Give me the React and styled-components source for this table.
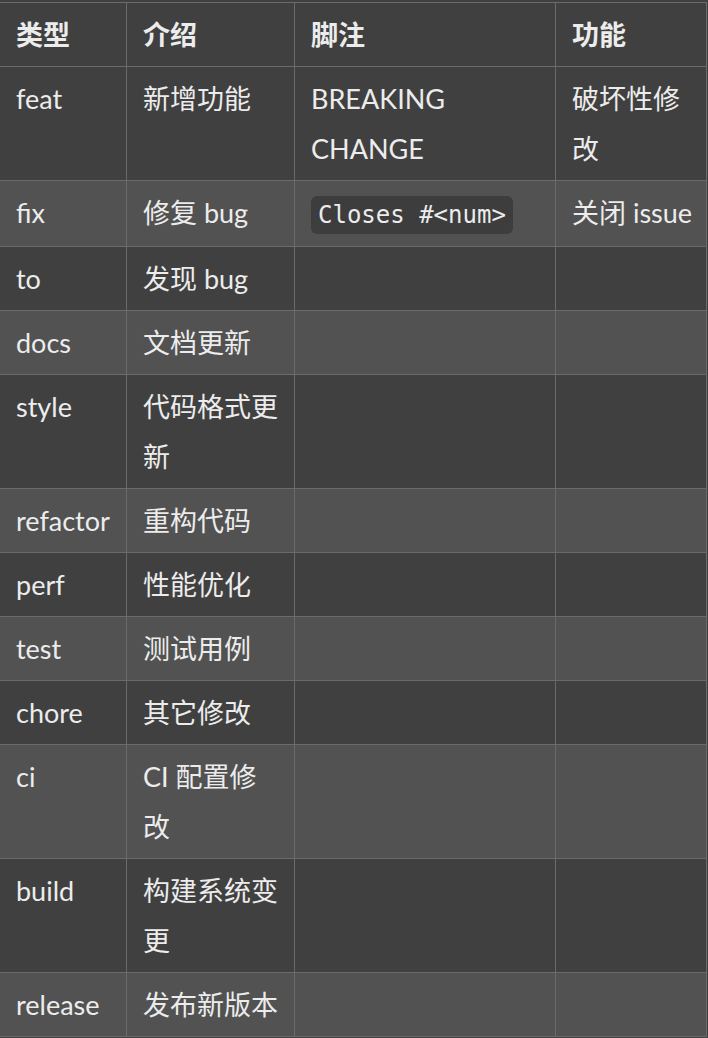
import React from "react";
import styled, { createGlobalStyle } from "styled-components";

const rows = [
    { type: "feat", intro: "新增功能", note: "BREAKING CHANGE", fn: "破坏性修改" },
    { type: "fix", intro: "修复 bug", note: "Closes #<num>", code: true, fn: "关闭 issue" },
    { type: "to", intro: "发现 bug" },
    { type: "docs", intro: "文档更新" },
    { type: "style", intro: "代码格式更新" },
    { type: "refactor", intro: "重构代码" },
    { type: "perf", intro: "性能优化" },
    { type: "test", intro: "测试用例" },
    { type: "chore", intro: "其它修改" },
    { type: "ci", intro: "CI 配置修改" },
    { type: "build", intro: "构建系统变更" },
    { type: "release", intro: "发布新版本" },
];

export default function App() {
    return (
        <>
            <Global />
            <Table>
                <colgroup>
                    <col style={{ width: 127 }} />
                    <col style={{ width: 168 }} />
                    <col style={{ width: 261 }} />
                    <col style={{ width: 151 }} />
                </colgroup>
                <thead>
                    <tr>
                        <Th>类型</Th>
                        <Th>介绍</Th>
                        <Th>脚注</Th>
                        <Th $tight>功能</Th>
                    </tr>
                </thead>
                <tbody>
                    {rows.map((r, i) => (
                        <Row key={r.type} $light={i % 2 === 1}>
                            <Td>{r.type}</Td>
                            <Td>{r.intro}</Td>
                            <Td>{r.code ? <Code>{r.note}</Code> : r.note}</Td>
                            <Td $tight>{r.fn}</Td>
                        </Row>
                    ))}
                </tbody>
            </Table>
        </>
    );
}

const Global = createGlobalStyle`
    html, body {
        margin: 0;
        padding: 0;
        background: #404040;
    }
    body {
        color: #ececec;
        font-family: Lato, "Noto Sans CJK SC", sans-serif;
        font-size: 27px;
    }
`;
const Table = styled.table`
    table-layout: fixed;
    width: 707px;
    margin: 2px 0 0 -1px;
    border-collapse: collapse;
    border-spacing: 0;
    line-height: 50px;
    background: #404040;
`;
const Th = styled.th`
    text-align: left;
    font-weight: 700;
    padding: 6.5px ${(p) => (p.$tight ? "6px" : "14px")} 6.5px 16px;
    border: 1px solid #6b6b6b;
    vertical-align: top;
`;
const Row = styled.tr`
    background: ${(p) => (p.$light ? "#525252" : "#404040")};
`;
const Td = styled.td`
    padding: 6.5px ${(p) => (p.$tight ? "6px" : "14px")} 6.5px 16px;
    border: 1px solid #6b6b6b;
    vertical-align: top;
    word-break: break-word;
`;
const Code = styled.code`
    font-family: "DejaVu Sans Mono", monospace;
    font-size: 24px;
    background: #3d3d3d;
    border-radius: 6px;
    padding: 5px 7px;
`;
